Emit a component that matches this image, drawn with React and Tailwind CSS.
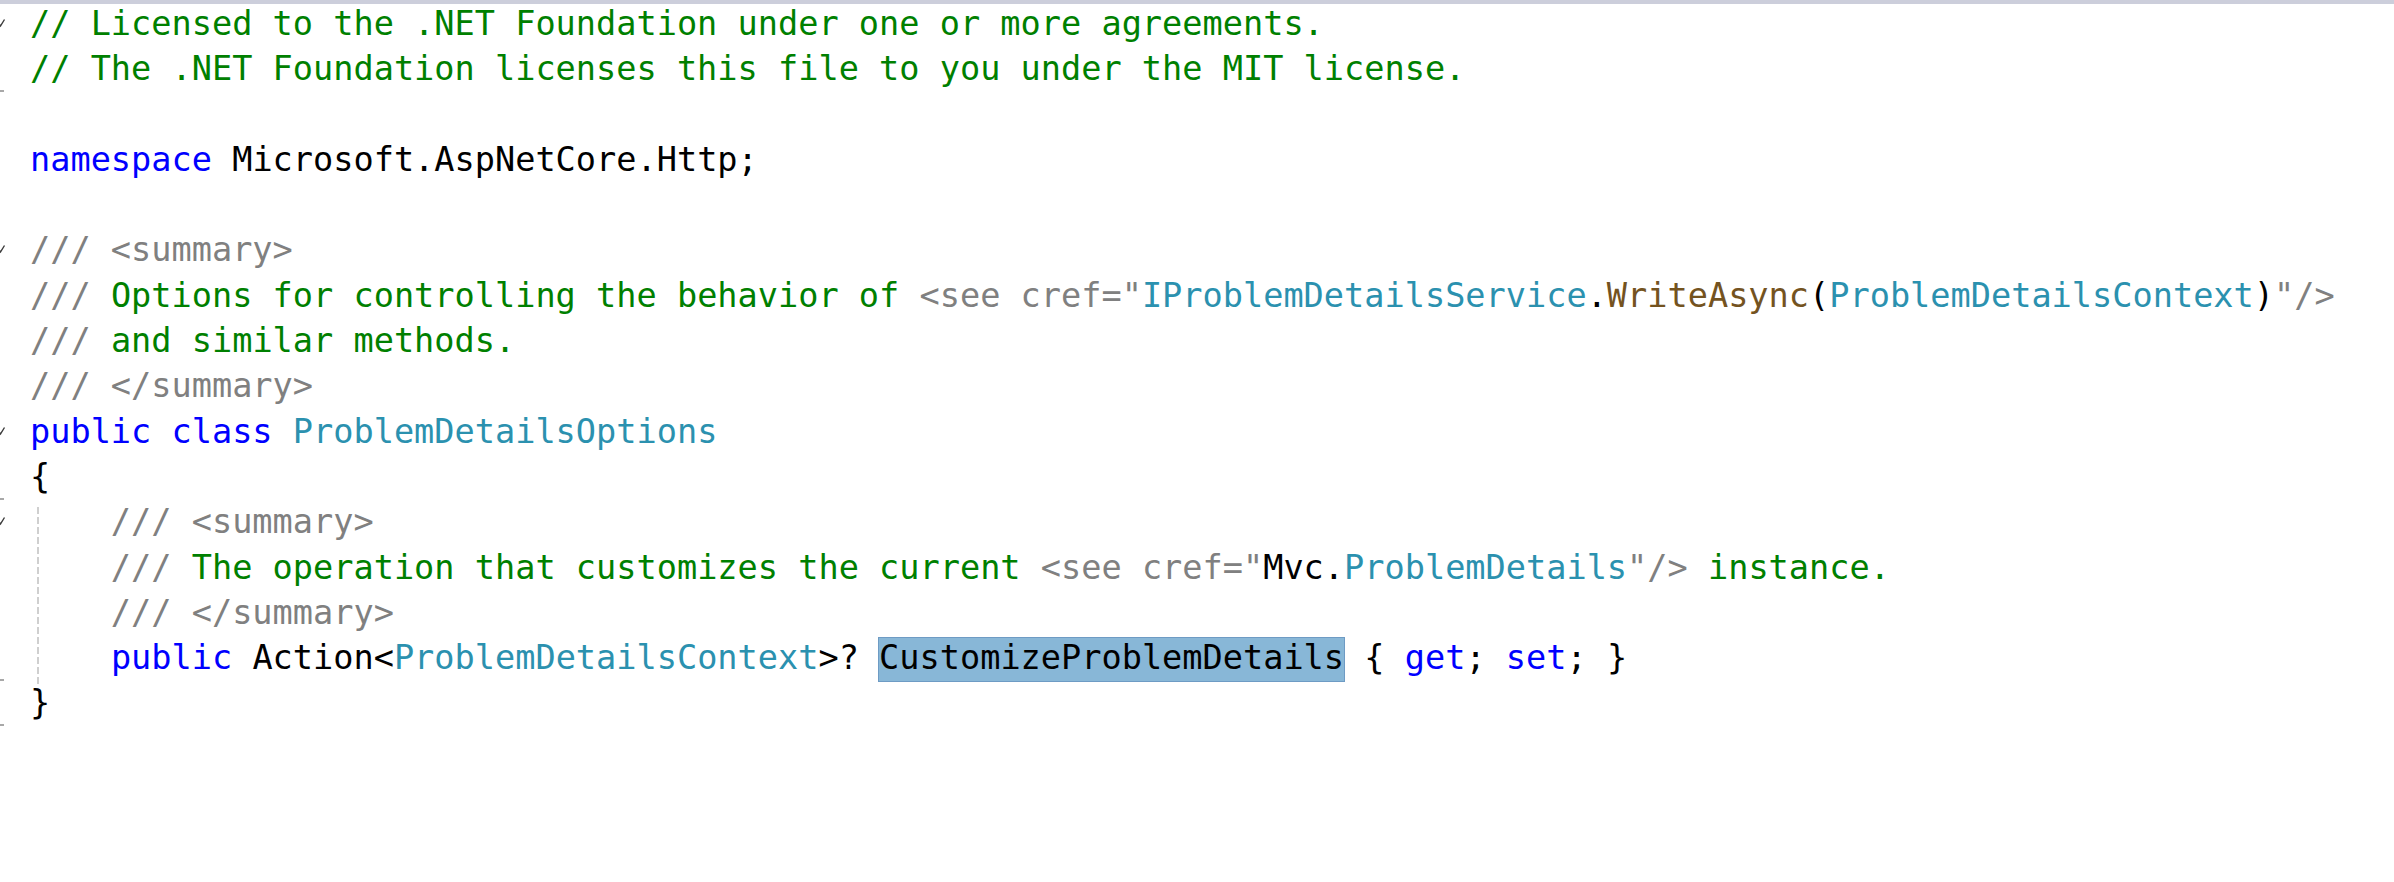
import React from "react";

const C = {
  g: "text-[#008000]",
  b: "text-[#0000ff]",
  t: "text-[#2b91af]",
  x: "text-[#808080]",
  m: "text-[#74531f]",
  k: "text-black",
};

function Chevron() {
  return (
    <svg className="absolute left-0 top-[14px]" width="6" height="10" viewBox="0 0 6 10">
      <path d="M-3 3 L0.5 8 L4.5 1.5" fill="none" stroke="#3c3c3c" strokeWidth="1.4" />
    </svg>
  );
}

function Tick() {
  return <div className="absolute left-0 top-[41px] w-[4px] h-[2px] bg-[#a8a8a8]" />;
}

function Line({ marker, children }) {
  return (
    <div className="flex h-[45.3px]">
      <div className="relative w-[30px] h-full shrink-0">
        {marker === "open" && <Chevron />}
        {marker === "end" && <Tick />}
      </div>
      <div className="whitespace-pre font-['DejaVu_Sans_Mono',monospace] text-[33.6px] leading-[40.6px] text-black">
        {children}
      </div>
    </div>
  );
}

const S = ({ c, children }) => <span className={C[c]}>{children}</span>;

export default function App() {
  return (
    <div className="w-[2394px] h-[882px] bg-white overflow-hidden">
      <div className="h-[4px] bg-[#cccedb]" />
      <div className="flex flex-col">
        <Line marker="open">
          <S c="g">// Licensed to the .NET Foundation under one or more agreements.</S>
        </Line>
        <Line marker="end">
          <S c="g">// The .NET Foundation licenses this file to you under the MIT license.</S>
        </Line>
        <Line> </Line>
        <Line>
          <S c="b">namespace</S>
          <S c="k"> Microsoft.AspNetCore.Http;</S>
        </Line>
        <Line> </Line>
        <Line marker="open">
          <S c="x">/// &lt;summary&gt;</S>
        </Line>
        <Line>
          <S c="x">/// </S>
          <S c="g">Options for controlling the behavior of </S>
          <S c="x">&lt;see cref="</S>
          <S c="t">IProblemDetailsService</S>
          <S c="k">.</S>
          <S c="m">WriteAsync</S>
          <S c="k">(</S>
          <S c="t">ProblemDetailsContext</S>
          <S c="k">)</S>
          <S c="x">"/&gt;</S>
        </Line>
        <Line>
          <S c="x">/// </S>
          <S c="g">and similar methods.</S>
        </Line>
        <Line>
          <S c="x">/// &lt;/summary&gt;</S>
        </Line>
        <Line marker="open">
          <S c="b">public class</S>
          <span> </span>
          <S c="t">ProblemDetailsOptions</S>
        </Line>
        <Line marker="end">
          <S c="k">{"{"}</S>
        </Line>
        <div className="relative">
          <div className="absolute left-[37px] top-[5px] bottom-[-2px] w-[2px] bg-[repeating-linear-gradient(to_bottom,#cfcfcf_0px,#cfcfcf_7px,transparent_7px,transparent_10px)]" />
          <Line marker="open">
            <S c="x">    /// &lt;summary&gt;</S>
          </Line>
          <Line>
            <S c="x">    /// </S>
            <S c="g">The operation that customizes the current </S>
            <S c="x">&lt;see cref="</S>
            <S c="k">Mvc.</S>
            <S c="t">ProblemDetails</S>
            <S c="x">"/&gt;</S>
            <S c="g"> instance.</S>
          </Line>
          <Line>
            <S c="x">    /// &lt;/summary&gt;</S>
          </Line>
          <Line marker="end">
            <S c="k">    </S>
            <S c="b">public</S>
            <S c="k"> Action&lt;</S>
            <S c="t">ProblemDetailsContext</S>
            <S c="k">&gt;? </S>
            <span className="bg-[#88b7d7] outline outline-1 outline-[#6e9bc4] pt-0 pb-[4px]">CustomizeProblemDetails</span>
            <S c="k"> {"{"} </S>
            <S c="b">get</S>
            <S c="k">; </S>
            <S c="b">set</S>
            <S c="k">; {"}"}</S>
          </Line>
        </div>
        <Line marker="end">
          <S c="k">{"}"}</S>
        </Line>
      </div>
    </div>
  );
}
